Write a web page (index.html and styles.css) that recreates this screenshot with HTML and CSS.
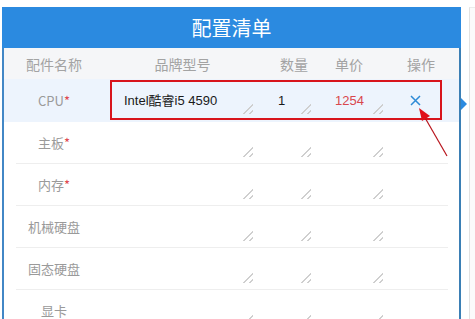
FILE: index.html
```html
<!DOCTYPE html>
<html lang="zh-CN">
<head>
<meta charset="utf-8">
<title>配置清单</title>
<link rel="stylesheet" href="styles.css">
</head>
<body>
<div class="page">
  <div class="panel">
    <div class="title">配置清单</div>
    <div class="body">
      <div class="thead">
        <div class="th">配件名称</div>
        <div class="th">品牌型号</div>
        <div class="th">数量</div>
        <div class="th">单价</div>
        <div class="th th-op">操作</div>
      </div>
      <div class="row active">
        <div class="row-inner">
          <div class="name">CPU<span class="req">*</span></div>
          <textarea class="f brand">Intel酷睿i5 4590</textarea>
          <textarea class="f qty">1</textarea>
          <textarea class="f price">1254</textarea>
          <div class="op">
            <svg class="del" width="11" height="11" viewBox="0 0 11 11"><path d="M1 1 L10 10 M10 1 L1 10" stroke="#2d8ad6" stroke-width="1.5" fill="none"/></svg>
          </div>
        </div>
      </div>
      <div class="row">
        <div class="row-inner">
          <div class="name">主板<span class="req">*</span></div>
          <textarea class="f brand"></textarea>
          <textarea class="f qty"></textarea>
          <textarea class="f price"></textarea>
          <div class="op"></div>
        </div>
      </div>
      <div class="row">
        <div class="row-inner">
          <div class="name">内存<span class="req">*</span></div>
          <textarea class="f brand"></textarea>
          <textarea class="f qty"></textarea>
          <textarea class="f price"></textarea>
          <div class="op"></div>
        </div>
      </div>
      <div class="row">
        <div class="row-inner">
          <div class="name">机械硬盘</div>
          <textarea class="f brand"></textarea>
          <textarea class="f qty"></textarea>
          <textarea class="f price"></textarea>
          <div class="op"></div>
        </div>
      </div>
      <div class="row">
        <div class="row-inner">
          <div class="name">固态硬盘</div>
          <textarea class="f brand"></textarea>
          <textarea class="f qty"></textarea>
          <textarea class="f price"></textarea>
          <div class="op"></div>
        </div>
      </div>
      <div class="row">
        <div class="row-inner">
          <div class="name">显卡</div>
          <textarea class="f brand"></textarea>
          <textarea class="f qty"></textarea>
          <textarea class="f price"></textarea>
          <div class="op"></div>
        </div>
      </div>
    </div>
    <div class="pointer"></div>
  </div>
  <div class="side"></div>
</div>
<div class="annot-box"></div>
<svg class="annot-arrow" width="475" height="319" viewBox="0 0 475 319">
  <line x1="447" y1="156" x2="424" y2="116" stroke="#b8141c" stroke-width="1.2"/>
  <polygon points="419,108 430,116 422,121" fill="#e0101a"/>
</svg>
</body>
</html>
```

FILE: styles.css
```css
html, body {
  margin: 0;
  background: #ffffff;
  overflow: hidden;
}
body {
  font-family: "Noto Sans CJK SC", "Liberation Sans", sans-serif;
  position: relative;
  height: 319px;
}
.page {
  display: flex;
  padding: 7px 0 0 2px;
  height: 312px;
}
.panel {
  width: 459px;
  position: relative;
  flex: none;
}
.title {
  height: 41px;
  background: #2b8ae0;
  color: #ffffff;
  font-size: 20px;
  display: flex;
  align-items: center;
  justify-content: center;
}
.body {
  border-left: 2px solid #4287c6;
  border-right: 2px solid #3b7fb5;
  height: 300px;
}
.thead {
  display: grid;
  grid-template-columns: 100px 157px 66px 44px 1fr;
  height: 31px;
  align-items: center;
  background: #f5f6f8;
  color: #a3a3a3;
  font-size: 14px;
  text-align: center;
}
.th-op {
  padding-left: 12px;
}
.row {
  padding: 0 11px 0 12px;
}
.row.active {
  background: #edf4fd;
}
.row-inner {
  display: flex;
  align-items: center;
  height: 41px;
  border-bottom: 1px solid #eeeeee;
}
.row.active .row-inner {
  height: 42px;
  border-bottom-color: transparent;
}
.name {
  width: 76px;
  flex: none;
  text-align: center;
  font-size: 13px;
  color: #9a9a9a;
}
.req {
  color: #e0484e;
}
.f {
  flex: none;
  box-sizing: border-box;
  height: 26px;
  border: none;
  background: transparent;
  padding: 5px 6px;
  font-family: "Liberation Sans", "Noto Sans CJK SC", sans-serif;
  font-size: 13px;
  line-height: 16px;
  color: #1a1a1a;
  resize: both;
  overflow: hidden;
  outline: none;
  white-space: nowrap;
  margin-top: 2px;
}
.f::-webkit-scrollbar {
  width: 10px;
  height: 10px;
  background: transparent;
}
.f::-webkit-resizer {
  background: linear-gradient(135deg,
    transparent 0, transparent 64%,
    #cfcfcf 64%, #cfcfcf 71%,
    transparent 71%, transparent 84%,
    #cfcfcf 84%, #cfcfcf 91%,
    transparent 91%);
}
.brand {
  width: 135px;
  margin-left: 26px;
}
.qty {
  width: 39px;
  margin-left: 19px;
}
.price {
  width: 54px;
  margin-left: 18px;
  color: #d9474d;
}
.op {
  flex: 1;
  display: flex;
  justify-content: center;
  align-items: center;
}
.del {
  display: block;
}
.pointer {
  position: absolute;
  left: 459px;
  top: 91px;
  width: 0;
  height: 0;
  border-left: 6px solid #2b8ae0;
  border-top: 6px solid transparent;
  border-bottom: 6px solid transparent;
}
.side {
  flex: 1;
  margin-left: 8px;
  border-left: 1px solid #e2e2e2;
  border-top: 1px solid #ececec;
  background: #fbfbfb;
}
.annot-box {
  position: absolute;
  left: 110px;
  top: 80px;
  width: 332px;
  height: 40px;
  box-sizing: border-box;
  border: 2px solid #d8141c;
}
.annot-arrow {
  position: absolute;
  left: 0;
  top: 0;
  pointer-events: none;
}
```
